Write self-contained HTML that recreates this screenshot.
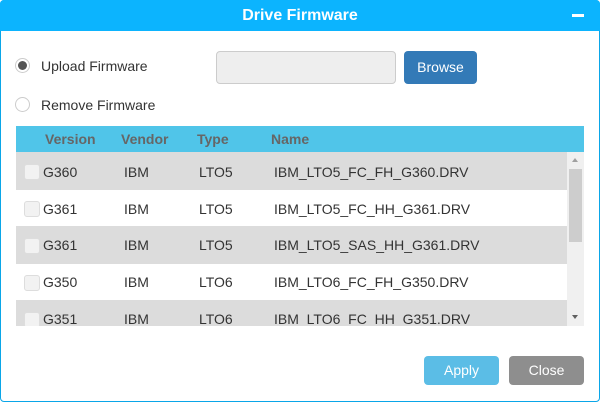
<!DOCTYPE html><html><head><style>
body{margin:0;width:600px;height:402px;background:#fff;font-family:"Liberation Sans",sans-serif;overflow:hidden;position:relative}
.frame{position:absolute;left:0;top:0;width:598px;height:400px;border:1px solid #0aa6e8;border-radius:4px}
.hd{position:absolute;left:0;top:0;width:600px;height:31px;background:#0cb4fe;color:#fff;font-weight:bold;font-size:16px;text-align:center;line-height:31px;border-radius:4px 4px 0 0}
.min{position:absolute;left:572px;top:14px;width:12px;height:3px;background:#fff}
.radio{position:absolute;left:15px;width:15px;height:15px;border:1px solid #ccc;border-radius:50%;box-sizing:border-box;background:#fff}
.radio.on::after{content:"";position:absolute;left:2px;top:2px;width:9px;height:9px;border-radius:50%;background:#555}
.lbl{position:absolute;left:41px;font-size:14px;color:#333}
.inp{position:absolute;left:216px;top:51px;width:180px;height:33px;box-sizing:border-box;background:#eee;border:1px solid #ccc;border-radius:4px}
.btn{position:absolute;color:#fff;font-size:14px;text-align:center;border-radius:4px}
.th{position:absolute;left:16px;top:126px;width:568px;height:26px;background:#50c5e9;font-weight:bold;color:#666;font-size:14px}
.th span,.row span{position:absolute;top:0}
.row{position:absolute;left:16px;width:551px;font-size:14px;color:#333}
.cb{position:absolute;left:8px;width:14px;height:14px;border:1px solid #ddd;border-radius:3px;background:#f2f2f2}
.sb{position:absolute;left:567px;top:152px;width:17px;height:174px;background:#f0f0f0}
</style></head><body>
<div class="frame"></div>
<div class="hd">Drive Firmware</div><div class="min"></div>
<div class="radio on" style="top:58px"></div><div class="lbl" style="top:58px">Upload Firmware</div>
<div class="radio" style="top:97px"></div><div class="lbl" style="top:97px">Remove Firmware</div>
<div class="inp"></div>
<div class="btn" style="left:404px;top:51px;width:73px;height:33px;line-height:33px;background:#337ab7">Browse</div>
<div class="th"><span style="left:29px;top:5px">Version</span><span style="left:105px;top:5px">Vendor</span><span style="left:181px;top:5px">Type</span><span style="left:255px;top:5px">Name</span></div>
<div style="position:absolute;left:16px;top:152px;width:568px;height:174px;overflow:hidden">
<div class="row" style="left:0;top:0;height:38px;background:#dcdcdc"><div class="cb" style="top:12px"></div><span style="left:27px;top:12px">G360</span><span style="left:108px;top:12px">IBM</span><span style="left:183px;top:12px">LTO5</span><span style="left:258px;top:12px">IBM_LTO5_FC_FH_G360.DRV</span></div>
<div class="row" style="left:0;top:38px;height:36px;background:#fff"><div class="cb" style="top:11px"></div><span style="left:27px;top:11px">G361</span><span style="left:108px;top:11px">IBM</span><span style="left:183px;top:11px">LTO5</span><span style="left:258px;top:11px">IBM_LTO5_FC_HH_G361.DRV</span></div>
<div class="row" style="left:0;top:74px;height:38px;background:#dcdcdc"><div class="cb" style="top:12px"></div><span style="left:27px;top:11px">G361</span><span style="left:108px;top:11px">IBM</span><span style="left:183px;top:11px">LTO5</span><span style="left:258px;top:11px">IBM_LTO5_SAS_HH_G361.DRV</span></div>
<div class="row" style="left:0;top:112px;height:36px;background:#fff"><div class="cb" style="top:11px"></div><span style="left:27px;top:10px">G350</span><span style="left:108px;top:10px">IBM</span><span style="left:183px;top:10px">LTO6</span><span style="left:258px;top:10px">IBM_LTO6_FC_FH_G350.DRV</span></div>
<div class="row" style="left:0;top:148px;height:38px;background:#dcdcdc"><div class="cb" style="top:12px"></div><span style="left:27px;top:11px">G351</span><span style="left:108px;top:11px">IBM</span><span style="left:183px;top:11px">LTO6</span><span style="left:258px;top:11px">IBM_LTO6_FC_HH_G351.DRV</span></div>
</div>
<div class="sb"><div style="position:absolute;left:2px;top:17px;width:13px;height:73px;background:#cdcdcd"></div>
<div style="position:absolute;left:5px;top:6px;border:3.5px solid transparent;border-bottom:4px solid #a0a0a0;border-top:0"></div>
<div style="position:absolute;left:5px;top:163px;border:3.5px solid transparent;border-top:4px solid #606060;border-bottom:0"></div></div>
<div class="btn" style="left:424px;top:356px;width:75px;height:29px;line-height:29px;background:#5bbde6">Apply</div>
<div class="btn" style="left:509px;top:356px;width:75px;height:29px;line-height:29px;background:#8e8e8e">Close</div>
</body></html>
